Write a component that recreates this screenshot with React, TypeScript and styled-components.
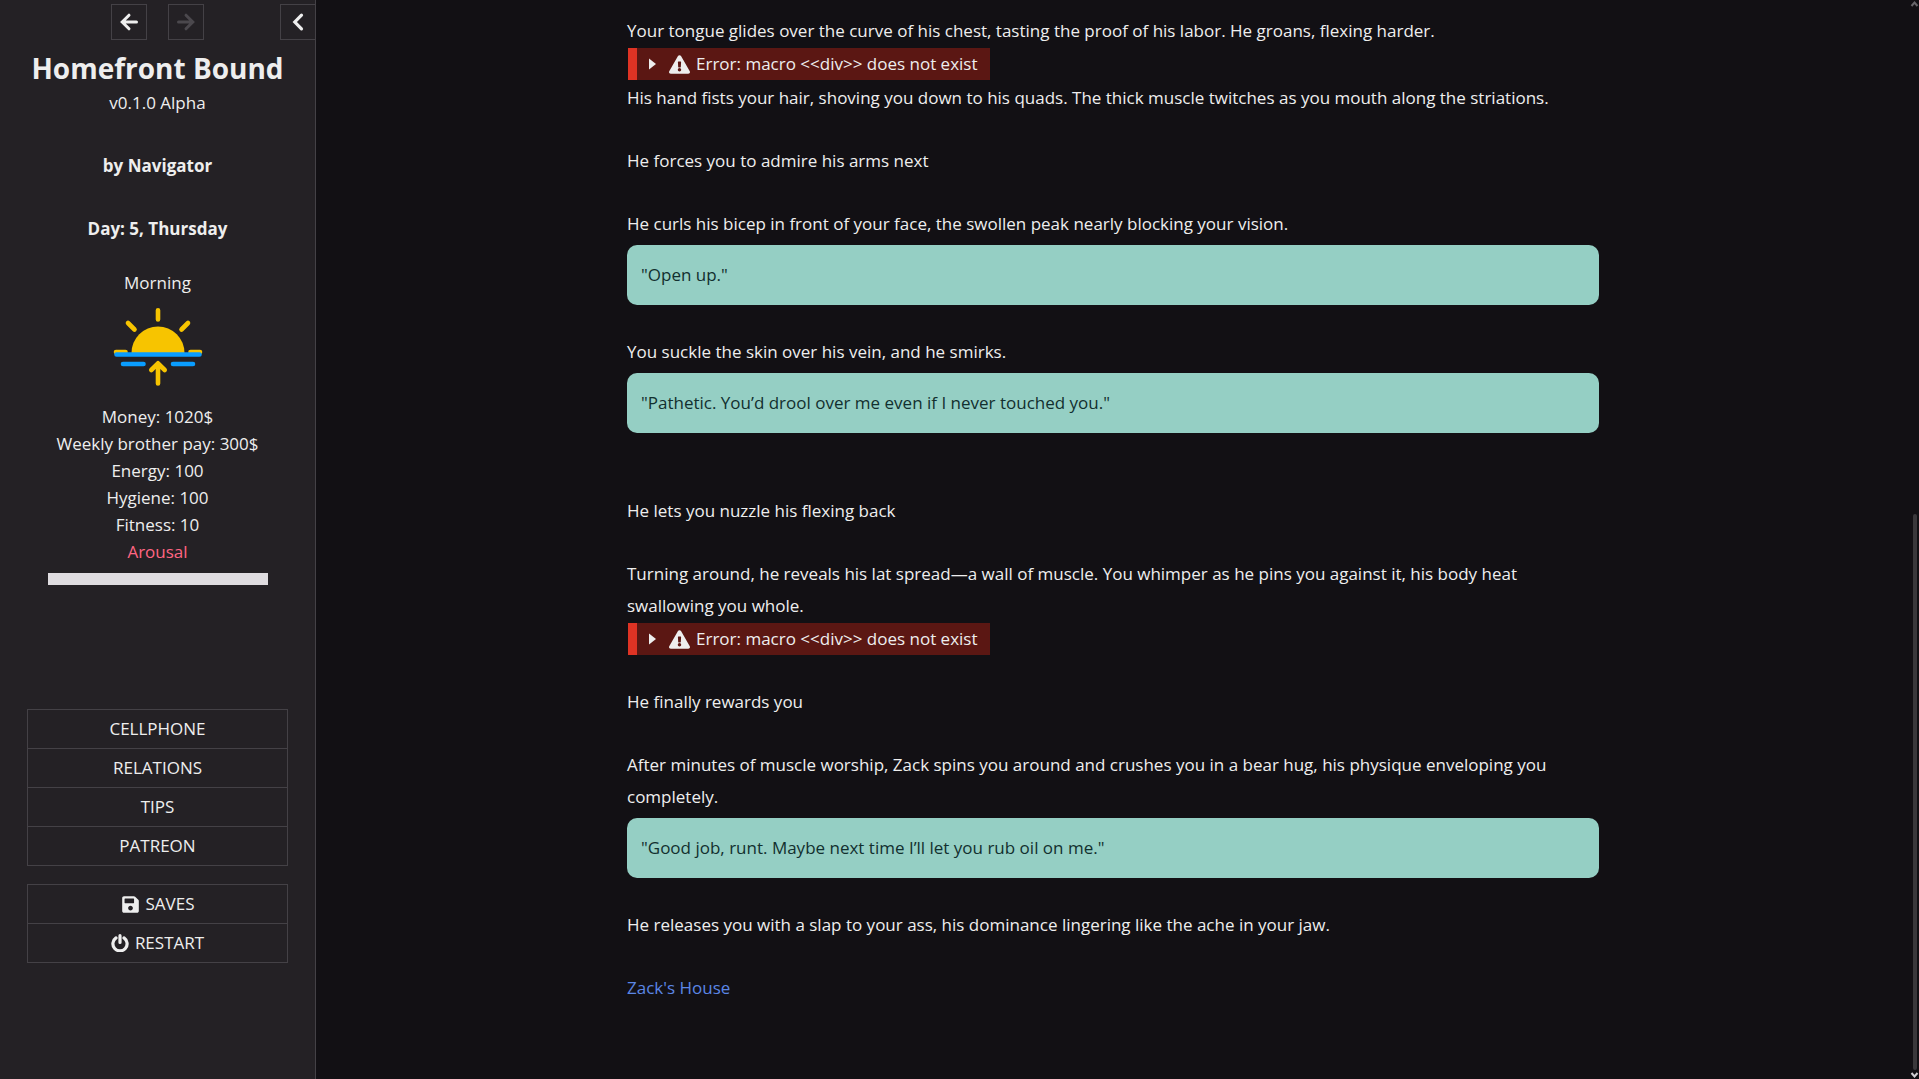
import React from 'react';
import styled, { createGlobalStyle } from 'styled-components';
import { FaSave, FaExclamationTriangle } from 'react-icons/fa';

const GlobalStyle = createGlobalStyle`
  *, *::before, *::after { box-sizing: border-box; }
  body {
    margin: 0;
    background: #121014;
    color: #eeeeee;
    font: 17px/32px 'Open Sans', 'Noto Sans', sans-serif;
  }
  button { font: inherit; color: inherit; cursor: pointer; }
`;

const Page = styled.div`
  display: grid;
  grid-template-columns: 316px minmax(0, 1fr) 9px;
  height: 100vh;
  overflow: hidden;
`;

const Sidebar = styled.aside`
  display: flex;
  flex-direction: column;
  align-items: stretch;
  background: #242125;
  border-right: 1px solid #444146;
  text-align: center;
`;

const NavBar = styled.nav`
  display: grid;
  grid-template-columns: 1fr auto 1fr;
  padding-top: 4px;
`;

const HistoryButtons = styled.div`
  grid-column: 2;
  display: flex;
  gap: 21px;
`;

const IconButton = styled.button<{ $edge?: boolean }>`
  display: grid;
  place-items: center;
  justify-self: end;
  width: ${({ $edge }) => ($edge ? '35px' : '36px')};
  height: 36px;
  padding: 0;
  background: transparent;
  border: 1px solid #444146;
  border-right-width: ${({ $edge }) => ($edge ? 0 : '1px')};
  &:disabled { color: #4b484d; cursor: default; }
`;

const Title = styled.h1`
  margin: 9px 0 0;
  font-size: 28px;
  line-height: 38px;
`;

const Credits = styled.div`
  display: flex;
  flex-direction: column;
  gap: 32px;
  line-height: 31px;
`;

const Status = styled.section`
  margin-top: 25px;
  line-height: 27px;
`;

const Sunrise = styled.svg`
  display: block;
  margin: 11px auto 16px;
`;

const StatList = styled.ul`
  margin: 0;
  padding: 0;
  list-style: none;
`;

const ArousalLabel = styled.div`
  color: #ff6582;
`;

const Meter = styled.div`
  height: 12px;
  margin: 8px 47px 0 48px;
  background: #dfdce0;
`;

const Menus = styled.div`
  display: flex;
  flex-direction: column;
  gap: 18px;
  margin: 124px 27px 0;
`;

const Menu = styled.ul`
  margin: 0;
  padding: 0;
  list-style: none;
  border: 1px solid #444146;
`;

const MenuItem = styled.li`
  & + & { border-top: 1px solid #444146; }
`;

const MenuButton = styled.button`
  display: flex;
  align-items: center;
  justify-content: center;
  gap: 6px;
  width: 100%;
  height: 38px;
  padding: 0;
  background: transparent;
  border: 0;
  text-transform: uppercase;
`;

const Story = styled.main`
  min-width: 0;
`;

const Passage = styled.article`
  max-width: 972px;
  margin: 0 auto;
  padding-top: 15px;
`;

const Line = styled.p<{ $gap?: boolean }>`
  margin: ${({ $gap }) => ($gap ? '31px' : 0)} 0 0;
`;

const Speech = styled.blockquote<{ $last?: boolean }>`
  margin: 5px 0 ${({ $last }) => ($last ? '62px' : '31px')};
  padding: 14px;
  border-radius: 10px;
  background: #95cfc4;
  color: #12302f;
`;

const ErrorBox = styled.button`
  display: flex;
  align-items: center;
  height: 32px;
  margin: 1px 0 2px 1px;
  padding: 0 12px;
  background: #5b1713;
  border: 0;
  border-left: 9px solid #df3324;
`;

const ErrorText = styled.span`
  margin-left: 6px;
`;

const Caret = styled.svg`
  margin-right: 12px;
`;

const PassageLink = styled.a`
  color: #5b86e5;
  text-decoration: none;
`;

const ScrollRail = styled.div`
  display: flex;
  flex-direction: column;
  align-items: center;
`;

const Track = styled.div`
  flex: 1;
  display: grid;
  grid-template-rows: 10fr 11fr;
`;

const Thumb = styled.div`
  grid-row: 2;
  width: 4px;
  background: #3a383b;
  border-radius: 2px;
`;

const Arrow = ({ back }: { back?: boolean }) => (
  <svg width="20" height="20" viewBox="0 0 20 20" fill="none" stroke="currentColor" strokeWidth="3" strokeLinecap="round" strokeLinejoin="miter">
    {back ? <path d="M17.500 10H4M10 3.200L3.200 10L10 16.800" /> : <path d="M2.500 10H16M10 3.200L16.800 10L10 16.800" />}
  </svg>
);

const PowerIcon = () => (
  <svg width="18" height="18" viewBox="0 0 18 18" fill="none" stroke="currentColor" strokeWidth="3.2" strokeLinecap="round">
    <path d="M5 3.900A7.100 7.100 0 1 0 13 3.900M9 1.700V8.500" />
  </svg>
);

const MacroError = () => (
  <ErrorBox type="button">
    <Caret width="8" height="12" viewBox="0 0 8 12" fill="currentColor">
      <path d="M0 0.5L7 6L0 11.5Z" />
    </Caret>
    <FaExclamationTriangle size={21} />
    <ErrorText>{'Error: macro <<div>> does not exist'}</ErrorText>
  </ErrorBox>
);

const stats = ['Money: 1020$', 'Weekly brother pay: 300$', 'Energy: 100', 'Hygiene: 100', 'Fitness: 10'];
const storyMenu = ['Cellphone', 'Relations', 'Tips', 'Patreon'];

export default function App() {
  return (
    <>
      <GlobalStyle />
      <Page>
        <Sidebar>
          <NavBar>
            <HistoryButtons>
              <IconButton type="button" aria-label="Go back"><Arrow back /></IconButton>
              <IconButton type="button" aria-label="Go forward" disabled><Arrow /></IconButton>
            </HistoryButtons>
            <IconButton type="button" aria-label="Toggle sidebar" $edge>
              <svg width="20" height="20" viewBox="0 0 20 20" fill="none" stroke="currentColor" strokeWidth="3.2" strokeLinecap="round">
                <path d="M13.500 3.200L6.800 10L13.500 16.800" />
              </svg>
            </IconButton>
          </NavBar>
          <Title>Homefront Bound</Title>
          <Credits>
            <span>v0.1.0 Alpha</span>
            <strong>by Navigator</strong>
            <strong>Day: 5, Thursday</strong>
          </Credits>
          <Status>
            <div>Morning</div>
            <Sunrise width="90" height="80" viewBox="0 0 90 80" fill="none" strokeLinecap="round" strokeLinejoin="round" strokeWidth="4.6">
              <path d="M18.5 46a26.5 26.5 0 0 1 53 0z" fill="#f7c400" />
              <path d="M45 3.300V12.500M15 16L21.500 22.500M75 16L68.500 22.500M3 45H12.500M77.500 45H87" stroke="#f7c400" />
              <path d="M3.500 47.500H86.500M10 57H30.500M60 57H80" stroke="#0a9dff" />
              <path d="M45 57V76.500M38.300 63L45 56.300L51.700 63" stroke="#f7c400" />
            </Sunrise>
            <StatList>
              {stats.map((stat) => <li key={stat}>{stat}</li>)}
            </StatList>
            <ArousalLabel id="arousal">Arousal</ArousalLabel>
            <Meter role="meter" aria-labelledby="arousal" aria-valuenow={0} aria-valuemin={0} aria-valuemax={100} />
          </Status>
          <Menus>
            <Menu>
              {storyMenu.map((label) => (
                <MenuItem key={label}><MenuButton type="button">{label}</MenuButton></MenuItem>
              ))}
            </Menu>
            <Menu>
              <MenuItem><MenuButton type="button"><FaSave size={19} />Saves</MenuButton></MenuItem>
              <MenuItem><MenuButton type="button"><PowerIcon />Restart</MenuButton></MenuItem>
            </Menu>
          </Menus>
        </Sidebar>
        <Story>
          <Passage>
            <Line>Your tongue glides over the curve of his chest, tasting the proof of his labor. He groans, flexing harder.</Line>
            <MacroError />
            <Line>His hand fists your hair, shoving you down to his quads. The thick muscle twitches as you mouth along the striations.</Line>
            <Line $gap>He forces you to admire his arms next</Line>
            <Line $gap>He curls his bicep in front of your face, the swollen peak nearly blocking your vision.</Line>
            <Speech>"Open up."</Speech>
            <Line>You suckle the skin over his vein, and he smirks.</Line>
            <Speech $last>"Pathetic. You’d drool over me even if I never touched you."</Speech>
            <Line>He lets you nuzzle his flexing back</Line>
            <Line $gap>Turning around, he reveals his lat spread—a wall of muscle. You whimper as he pins you against it, his body heat swallowing you whole.</Line>
            <MacroError />
            <Line $gap>He finally rewards you</Line>
            <Line $gap>After minutes of muscle worship, Zack spins you around and crushes you in a bear hug, his physique enveloping you completely.</Line>
            <Speech>"Good job, runt. Maybe next time I’ll let you rub oil on me."</Speech>
            <Line>He releases you with a slap to your ass, his dominance lingering like the ache in your jaw.</Line>
            <Line $gap><PassageLink href="#zacks-house">Zack's House</PassageLink></Line>
          </Passage>
        </Story>
        <ScrollRail aria-hidden="true">
          <svg width="9" height="8" viewBox="0 0 9 8" fill="none" stroke="#68666a" strokeWidth="2"><path d="M1.500 6L4.500 2.500L7.500 6" /></svg>
          <Track><Thumb /></Track>
          <svg width="9" height="9" viewBox="0 0 9 9" fill="none" stroke="#d0ced2" strokeWidth="2"><path d="M1.500 3L4.500 6.500L7.500 3" /></svg>
        </ScrollRail>
      </Page>
    </>
  );
}
